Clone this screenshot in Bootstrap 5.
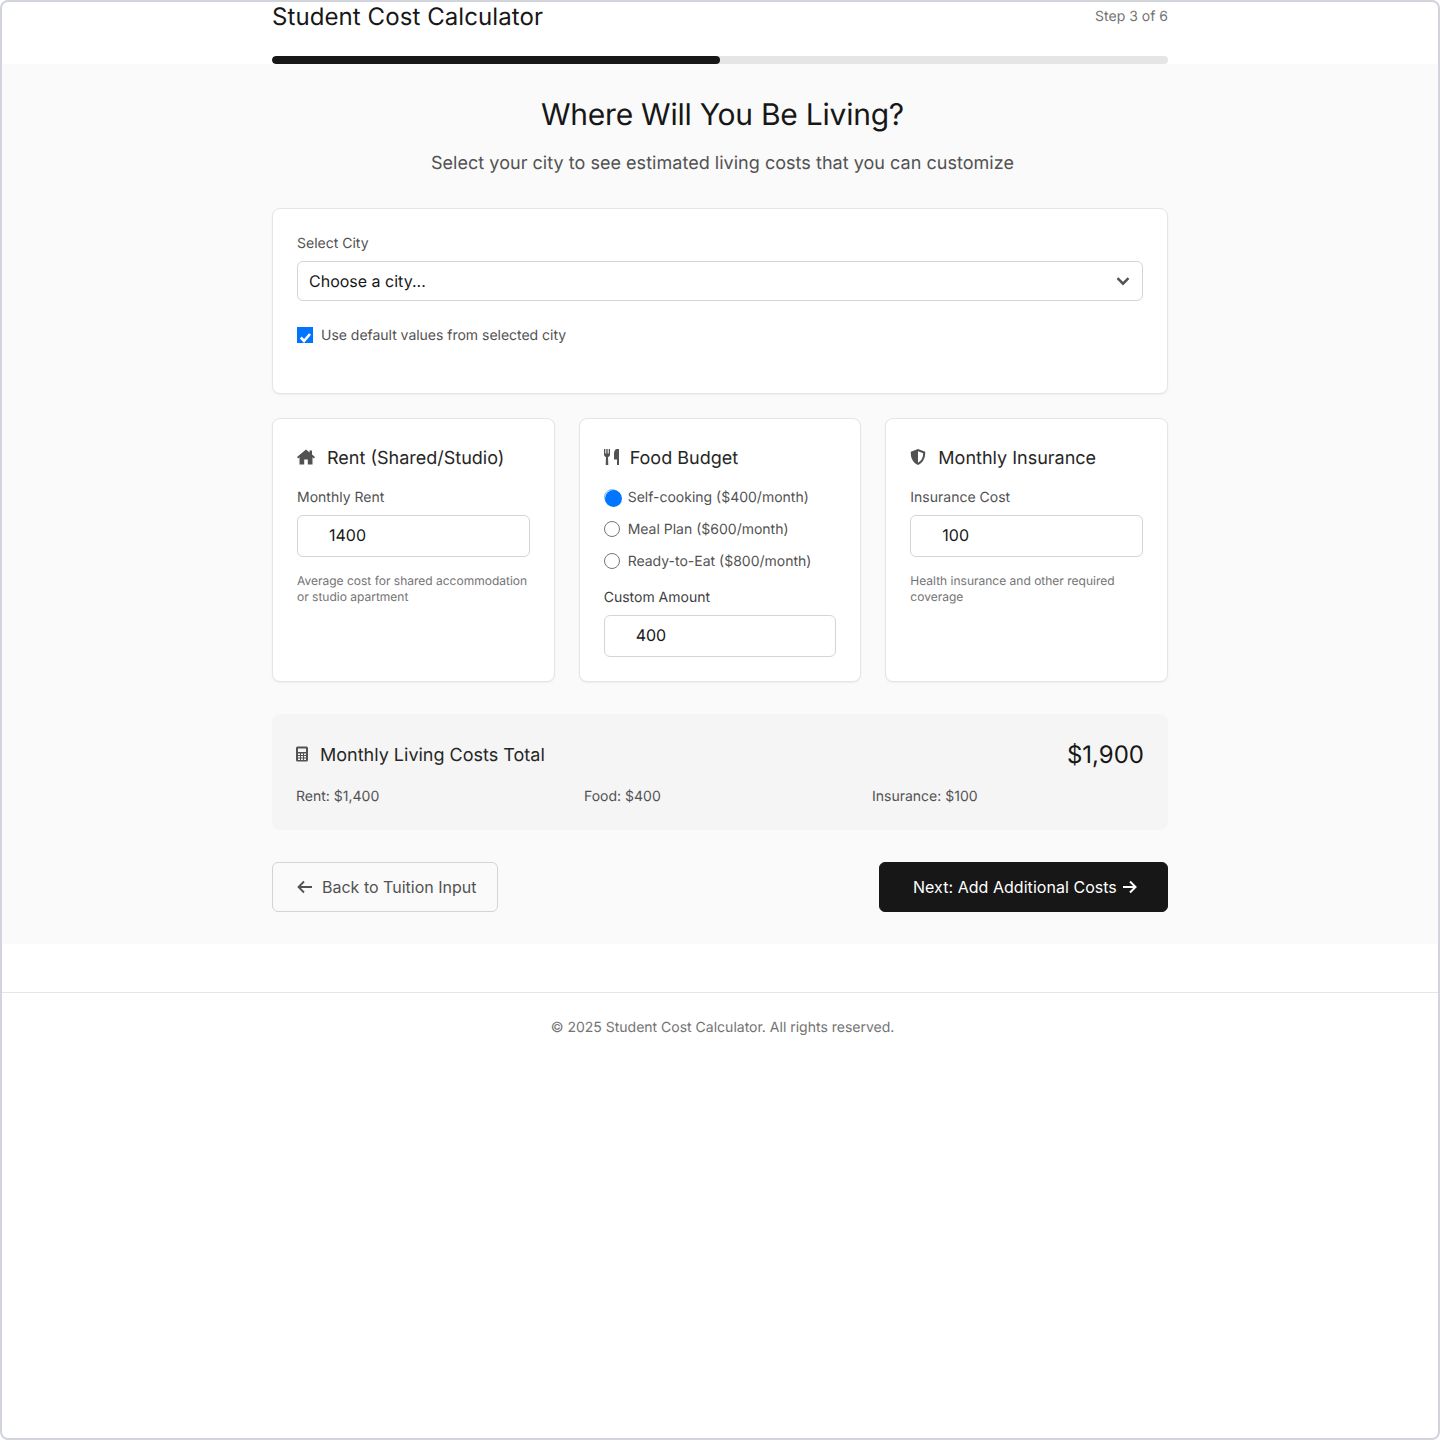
<!DOCTYPE html>
<html lang="en">
<head>
<meta charset="utf-8">
<title>Student Cost Calculator</title>
<link rel="stylesheet" href="https://cdn.jsdelivr.net/npm/bootstrap@5.3.0/dist/css/bootstrap.min.css">
<style>
html,body{margin:0;background:#fff}
body{font-family:Inter,"Liberation Sans",sans-serif;color:#171717;text-rendering:geometricPrecision}
.app-frame{height:1440px;border:2px solid #d1d5db;border-radius:8px;background:#fff;overflow:hidden}
.wrap-896{width:896px;margin-left:270px}
.top-head{height:62px}
.app-title{font-size:24px;line-height:32px;font-weight:400;letter-spacing:.08px;margin:-1px 0 23px;color:#171717}
.step-text{font-size:14px;line-height:22px;color:#737373;margin-top:4px}
.prog-track{height:8px;background:#e5e5e5;border-radius:4px;overflow:hidden}
.prog-fill{height:100%;background:#171717;border-radius:4px}
.main-zone{background:#fafafa;height:880px;padding-top:32px}
.page-h{font-size:30px;line-height:38px;font-weight:400;letter-spacing:-.24px;color:#171717;text-align:center;padding-left:5px;margin:0 0 15px}
.page-sub{font-size:18px;line-height:30px;letter-spacing:.03px;color:#525252;text-align:center;padding-left:5px;margin:0 0 29px}
.pane{background:#fff;border:1px solid #e5e5e5;border-radius:8px;box-shadow:0 1px 2px rgba(0,0,0,.05);padding:24px}
.pane-city{height:186px}
.fld-label{display:block;font-size:14px;line-height:22px;color:#525252;margin-bottom:6px}
.fld-label-dark{color:#404040;margin-top:14px}
.city-sel{height:40px;border:1px solid #d4d4d4;border-radius:6px;padding:0 11px;font-size:16px;color:#171717;background:#fff url("data:image/svg+xml,%3Csvg xmlns='http://www.w3.org/2000/svg' viewBox='0 0 16 16'%3E%3Cpath d='M2.500 5.200 8 10.700l5.500-5.500' fill='none' stroke='%23525252' stroke-width='2.400'/%3E%3C/svg%3E") no-repeat right 11px center/16px 16px}
.check-row{display:flex;align-items:center;gap:8px;font-size:14px;line-height:22px;letter-spacing:-.02px;color:#525252;margin-top:24px}
.chk{appearance:none;-webkit-appearance:none;width:16px;height:16px;margin:-2px 0 0;flex:none;background:#0075ff url("data:image/svg+xml,%3Csvg xmlns='http://www.w3.org/2000/svg' viewBox='0 0 16 16'%3E%3Cpath d='M3.800 10.500 7 14l6-7' fill='none' stroke='%23fff' stroke-width='2.600'/%3E%3C/svg%3E") no-repeat center/16px 16px}
.trio{display:grid;grid-template-columns:repeat(3,1fr);gap:24px;margin-top:24px}
.pane-trio{height:264px}
.pane-title{display:flex;align-items:center;font-size:18px;line-height:28px;font-weight:400;color:#262626;margin:2px 0 14px}
.ico{fill:#525252;flex:none;margin-bottom:4px}
.amt{height:42px;border:1px solid #d4d4d4;border-radius:6px;padding:0 0 2px 31px;font-size:16px;color:#171717;background:#fff}
.hint{font-size:12px;line-height:16px;color:#737373;margin:16px 0 0}
.rad-row{display:flex;align-items:center;gap:8px;font-size:14px;line-height:22px;color:#525252;margin-bottom:10px}
.rad{appearance:none;-webkit-appearance:none;width:16px;height:16px;border:1px solid #767676;border-radius:50%;margin:-2px 0 0;flex:none;background:#fff}
.rad-on{border:1px solid #8ab8f5;position:relative}
.rad-on::after{content:"";position:absolute;left:0;top:0;width:17px;height:17px;border-radius:50%;background:#0075ff}
.sum-box{background:#f5f5f5;border-radius:8px;margin-top:32px;height:116px;padding:24px}
.sum-title{font-size:18px;line-height:28px;color:#262626;font-weight:400;margin:0;padding-top:2px}
.sum-head{margin-top:1px;height:32px}
.sum-val{font-size:24px;line-height:32px;color:#171717}
.sum-cols{display:grid;grid-template-columns:repeat(3,1fr);gap:16px;font-size:14px;line-height:22px;color:#525252;margin-top:15px}
.nav-btns{margin-top:32px}
.bk-btn,.nx-btn{height:50px;border-radius:6px;font-size:16px;line-height:24px;display:inline-flex;align-items:center;padding:0}
.bk-btn{width:226px;background:transparent;border:1px solid #d4d4d4;color:#525252;justify-content:flex-start;gap:10px;padding-left:24px}
.bk-btn:hover{background:transparent;color:#525252;border-color:#d4d4d4}
.nx-btn{width:289px;background:#171717;border:1px solid #171717;color:#fff;justify-content:flex-start;gap:5px;padding-left:33px;letter-spacing:.04px}
.nx-btn:hover{background:#171717;color:#fff;border-color:#171717}
.foot{margin-top:48px;border-top:1px solid #e5e5e5;padding-top:24px;text-align:center;font-size:14px;line-height:22px;color:#737373}
.foot-text{padding-left:5px;margin:0}
</style>
</head>
<body>
<div class="app-frame">
  <header class="top-head">
    <div class="wrap-896">
      <div class="d-flex justify-content-between align-items-start">
        <h1 class="app-title">Student Cost Calculator</h1>
        <span class="step-text">Step 3 of 6</span>
      </div>
      <div class="prog-track"><div class="prog-fill" style="width:50%"></div></div>
    </div>
  </header>
  <main class="main-zone">
    <div class="wrap-896">
      <h2 class="page-h">Where Will You Be Living?</h2>
      <p class="page-sub">Select your city to see estimated living costs that you can customize</p>
      <section class="pane pane-city">
        <label class="fld-label" for="city">Select City</label>
        <div class="city-sel d-flex align-items-center" id="city">Choose a city...</div>
        <label class="check-row"><input class="chk" type="checkbox" checked>Use default values from selected city</label>
      </section>
      <div class="trio">
        <section class="pane pane-trio">
          <h3 class="pane-title">
            <svg class="ico" width="18" height="16" viewBox="0 0 18 16" style="margin-right:12px"><path d="M9 .5 0 8l1.100 1.400L2.500 8.200V15.500h4.700v-5h3.600v5h4.700V8.200l1.400 1.200L18 8l-3-2.500V1.500h-2.500v1.900z"/></svg>Rent (Shared/Studio)
          </h3>
          <label class="fld-label">Monthly Rent</label>
          <div class="amt d-flex align-items-center">1400</div>
          <p class="hint">Average cost for shared accommodation or studio apartment</p>
        </section>
        <section class="pane pane-trio">
          <h3 class="pane-title">
            <svg class="ico" width="15" height="16" viewBox="0 0 15 16" style="margin-right:11px"><path d="M0 0h1.300v4.500h1v-4.500h1.400v4.500h1v-4.500H6v5.500C6 7 5 7.800 4 8l.300 7.700a1 1 0 0 1-1 .3h-.600a1 1 0 0 1-1-.3L2 8C1 7.800 0 7 0 5.500zM13 0h2v16h-2v-5.500h-3V4.500C10 2 11.500 0 13 0z"/></svg>Food Budget
          </h3>
          <label class="rad-row"><input class="rad rad-on" type="radio" name="food" checked>Self-cooking ($400/month)</label>
          <label class="rad-row"><input class="rad" type="radio" name="food">Meal Plan ($600/month)</label>
          <label class="rad-row"><input class="rad" type="radio" name="food">Ready-to-Eat ($800/month)</label>
          <label class="fld-label fld-label-dark">Custom Amount</label>
          <div class="amt d-flex align-items-center">400</div>
        </section>
        <section class="pane pane-trio">
          <h3 class="pane-title">
            <svg class="ico" width="16" height="16" viewBox="0 0 16 16" style="margin-right:12px"><path fill-rule="evenodd" d="M8 0 15.200 2.800C15.500 8.500 13.500 13.600 8 16 2.500 13.600.500 8.500.800 2.800zM8 2.200V13.700C11.500 11.900 13.100 8.500 13.200 4.200z"/></svg>Monthly Insurance
          </h3>
          <label class="fld-label">Insurance Cost</label>
          <div class="amt d-flex align-items-center">100</div>
          <p class="hint">Health insurance and other required coverage</p>
        </section>
      </div>
      <section class="sum-box">
        <div class="sum-head d-flex justify-content-between align-items-center">
          <h3 class="sum-title d-flex align-items-center">
            <svg class="ico" width="12" height="16" viewBox="0 0 12 16" style="margin-right:12px"><path fill-rule="evenodd" d="M1.500.5h9A1.500 1.500 0 0 1 12 2v12a1.500 1.500 0 0 1-1.500 1.500h-9A1.500 1.500 0 0 1 0 14V2A1.500 1.500 0 0 1 1.500.5zM2 2.500V6h8V2.500zM2 7.500v1.500h2V7.500zM5 7.500v1.500h2V7.500zM8 7.500v1.500h2V7.500zM2 10v1.500h2V10zM5 10v1.500h2V10zM8 10v1.500h2V10zM2 12.500V14h2v-1.500zM5 12.500V14h2v-1.500zM8 12.500V14h2v-1.500z"/></svg>Monthly Living Costs Total
          </h3>
          <span class="sum-val">$1,900</span>
        </div>
        <div class="sum-cols"><span>Rent: $1,400</span><span>Food: $400</span><span>Insurance: $100</span></div>
      </section>
      <div class="nav-btns d-flex justify-content-between">
        <button class="btn bk-btn" type="button"><svg width="15" height="14" viewBox="0 0 15 14"><path d="M7 1.500 1.500 7 7 12.500M2 7h13" fill="none" stroke="#525252" stroke-width="1.800"/></svg>Back to Tuition Input</button>
        <button class="btn nx-btn" type="button">Next: Add Additional Costs<svg width="15" height="14" viewBox="0 0 15 14"><path d="M8 1.500 13.500 7 8 12.500M13 7H1" fill="none" stroke="#fff" stroke-width="2"/></svg></button>
      </div>
    </div>
  </main>
  <footer class="foot"><p class="foot-text">© 2025 Student Cost Calculator. All rights reserved.</p></footer>
</div>
</body>
</html>
